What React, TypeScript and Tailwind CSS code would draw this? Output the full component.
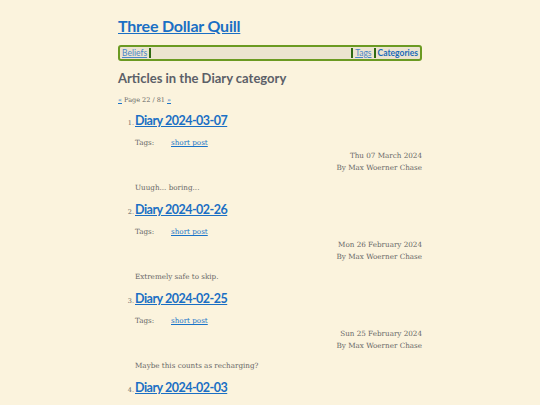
import React from "react";

const posts = [
  { n: 1, title: "Diary 2024-03-07", date: "Thu 07 March 2024", summary: "Uuugh... boring..." },
  { n: 2, title: "Diary 2024-02-26", date: "Mon 26 February 2024", summary: "Extremely safe to skip." },
  { n: 3, title: "Diary 2024-02-25", date: "Sun 25 February 2024", summary: "Maybe this counts as recharging?" },
  { n: 4, title: "Diary 2024-02-03", date: "Sat 03 February 2024", summary: "Another day." },
];

const head = { fontFamily: 'Lato, "Open Sans", sans-serif' };
const body = { fontFamily: '"DejaVu Serif", "Liberation Serif", serif' };

export default function App() {
  return (
    <div className="h-[405px] w-[540px] overflow-hidden bg-[#fbf3dd] text-[#555555]">
      <div className="mx-auto w-[304px] pt-[14px]">
        <h1 style={head} className="text-[16px] font-bold leading-[24px] tracking-[-0.2px]">
          <a className="text-[#1a6fc4] underline">Three Dollar Quill</a>
        </h1>
        <nav
          style={head}
          className="mt-[7px] flex h-[16px] items-center rounded-[3px] border-2 border-[#6b9a22] bg-[#ece4d0] px-[2px] text-[8.5px] leading-none"
        >
          <a className="text-[#4a86c8] underline">Beliefs</a>
          <span className="ml-[2px] h-[10px] w-[2px] bg-[#2f6a12]"></span>
          <span className="flex-1"></span>
          <span className="mr-[2px] h-[10px] w-[2px] bg-[#2f6a12]"></span>
          <a className="text-[#4a86c8] underline">Tags</a>
          <span className="mx-[2px] h-[10px] w-[2px] bg-[#2f6a12]"></span>
          <a className="font-bold text-[#1a6bb8]">Categories</a>
        </nav>
        <h2 style={head} className="mt-[8px] text-[13px] font-bold leading-[18px] text-[#5b6068]">
          Articles in the Diary category
        </h2>
        <p style={body} className="mt-[8px] text-[6.5px] leading-[10px] text-[#666]">
          <a className="text-[#1a73c8] underline">«</a> Page 22 / 81{" "}
          <a className="text-[#1a73c8] underline">»</a>
        </p>
        <ol className="mt-[7px]">
          {posts.map((p) => (
            <li key={p.n} className="mb-[7px]">
              <div className="flex items-baseline">
                <span style={body} className="w-[17px] pr-[1px] text-right text-[6.5px] text-[#666]">
                  {p.n}.
                </span>
                <a style={head} className="text-[12.5px] font-bold leading-[18px] tracking-[-0.5px] text-[#1a6fc4] underline">
                  {p.title}
                </a>
              </div>
              <div style={body} className="pl-[17px] text-[7.2px] leading-[12px] text-[#666]">
                <div className="mt-[7px] flex">
                  <span className="w-[36px]">Tags:</span>
                  <a className="text-[#1a73c8] underline">short post</a>
                </div>
                <div className="mt-[1px] text-right">{p.date}</div>
                <div className="text-right">By Max Woerner Chase</div>
                <p className="mt-[8px]">{p.summary}</p>
              </div>
            </li>
          ))}
        </ol>
      </div>
    </div>
  );
}
